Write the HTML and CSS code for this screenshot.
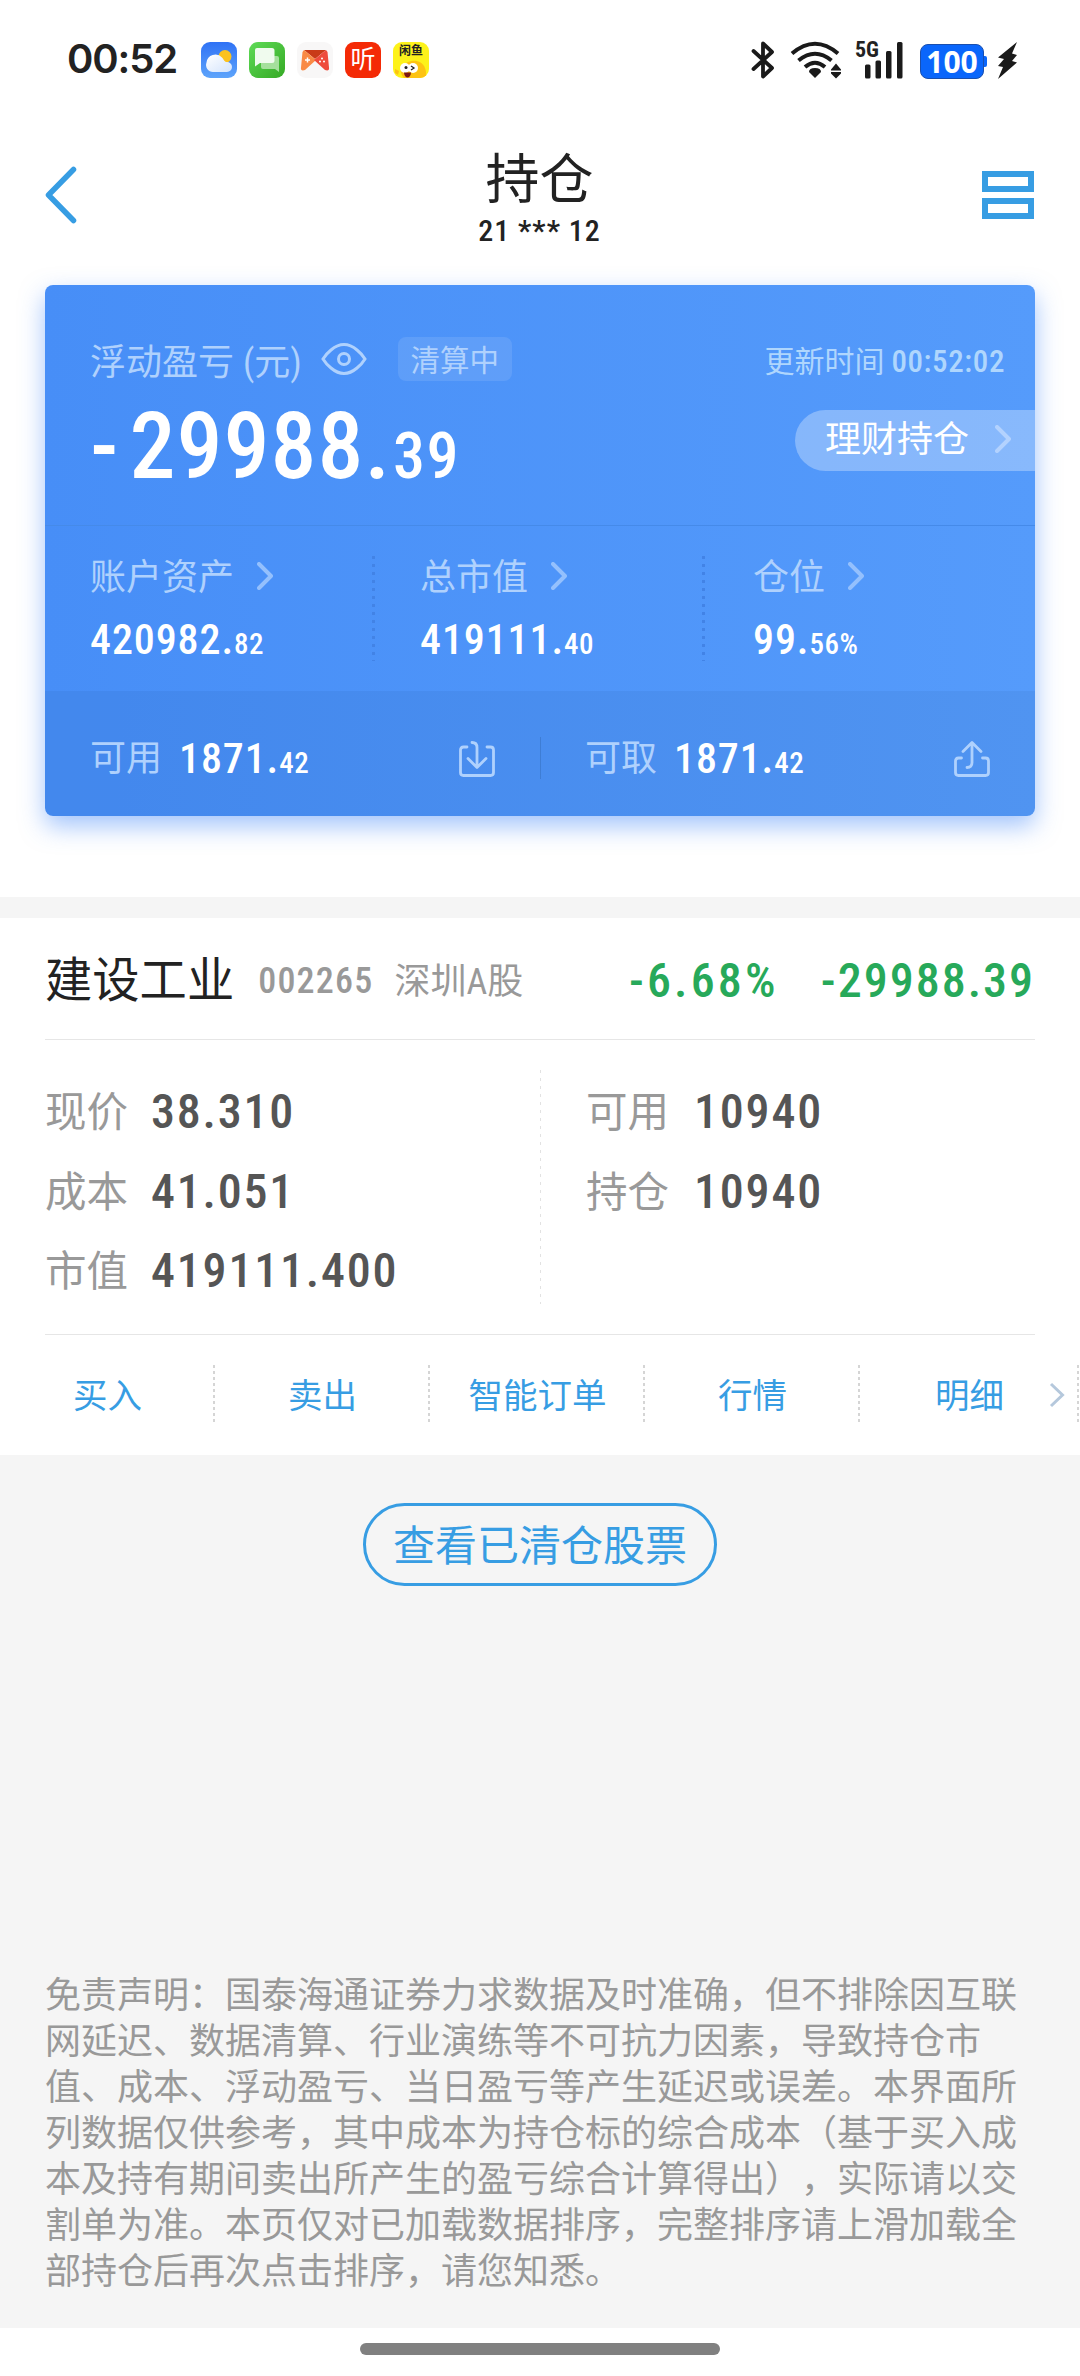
FILE: index.html
```html
<!DOCTYPE html>
<html lang="zh-CN">
<head>
  <meta charset="UTF-8" />
  <title>持仓</title>
  <link rel="stylesheet" href="styles.css">
</head>
<body>

<div class="status-bar">
  <span class="clock">00:52</span>
  <div class="app-icons">
    <svg width="36" height="36" viewBox="0 0 36 36">
      <defs>
        <linearGradient id="sky" x1="0" y1="0" x2="0" y2="1"><stop offset="0" stop-color="#2f72f5"/><stop offset="1" stop-color="#5ea4fb"/></linearGradient>
        <linearGradient id="cloud" x1="0" y1="0" x2="1" y2="1"><stop offset="0" stop-color="#fff"/><stop offset="1" stop-color="#d3e3fc"/></linearGradient>
      </defs>
      <rect width="36" height="36" rx="9" fill="url(#sky)"/>
      <circle cx="24" cy="14.500" r="6.500" fill="#fcc21f"/>
      <path d="M12 30a7 7 0 0 1-6.500-9.500A9 9 0 0 1 21 15.500c2 2 2 4.500 5 4.500a5 5 0 0 1 0 10z" fill="url(#cloud)"/>
    </svg>
    <svg width="36" height="36" viewBox="0 0 36 36">
      <defs><linearGradient id="msg" x1="0" y1="0" x2="1" y2="1"><stop offset="0" stop-color="#5fdb57"/><stop offset="1" stop-color="#35a924"/></linearGradient></defs>
      <rect width="36" height="36" rx="9" fill="url(#msg)"/>
      <path d="M13 14h15a2 2 0 0 1 2 2v14l-4-3H14a2 2 0 0 1-2-2v-9z" fill="#a5e09c"/>
      <path d="M8 6h15a2.500 2.500 0 0 1 2.500 2.500v10A2.500 2.500 0 0 1 23 21H11l-5 3.500V8a2 2 0 0 1 2-2z" fill="#f0fbee"/>
    </svg>
    <svg width="36" height="36" viewBox="0 0 36 36">
      <rect width="36" height="36" rx="9" fill="#f8f7f7"/>
      <path d="M7 8h22L18 17z" fill="#c93a18"/>
      <path d="M7 8l12 10-11 10c-3 1-4.500 0-4-2.500L5.500 10z" fill="#f98a45"/>
      <path d="M29 8L17 18l11 10c3 1 4.500 0 4-2.500L30.500 10z" fill="#ee4b3c"/>
      <path d="M10.500 15.500v5M8 18h5" stroke="#fff" stroke-width="1.500"/>
      <g fill="#fff"><circle cx="25" cy="16.500" r="1"/><circle cx="23" cy="19.500" r="1"/><circle cx="27" cy="19.500" r="1"/></g>
    </svg>
    <span class="app app-red">听</span>
    <span class="app app-yellow">闲鱼
      <svg width="36" height="20" viewBox="0 0 36 20">
        <path d="M8 8c6-9 20-10 24 0 2 5 1 9-1 12H13C9 17 7 12 8 8z" fill="#fdc313"/>
        <circle cx="12" cy="8" r="5" fill="#fff"/><circle cx="20" cy="8" r="5" fill="#fff"/>
        <circle cx="13" cy="7.500" r="1.500" fill="#222"/>
        <path d="M18 6l3 2-3 2" fill="none" stroke="#222" stroke-width="1.300"/>
        <path d="M11 12.500h7c0 3-2 5-3.500 5s-3.500-2-3.500-5z" fill="#7c1613"/>
        <path d="M2 9l4 2-1 4-3-2z" fill="#fdc313"/>
      </svg>
    </span>
  </div>
  <div class="sys-icons">
    <svg width="24" height="40" viewBox="0 0 24 40">
      <path d="M2.500 11L21 28l-9 8.500V3.500L21 12 2.500 29" fill="none" stroke="#1a1a1a" stroke-width="3.800" stroke-linejoin="round" stroke-linecap="round"/>
    </svg>
    <svg class="wifi" width="52" height="40" viewBox="0 0 52 40">
      <g fill="none" stroke="#1a1a1a" stroke-width="4">
        <path d="M2 13.500Q25 -6 48 13.500"/>
        <path d="M8.500 20.500Q25 7 41.500 20.500"/>
        <path d="M15 27Q25 18.500 35 27"/>
      </g>
      <path d="M25 38l-6-6q0-4 6-4t6 4z" fill="#1a1a1a"/>
      <path d="M46 23.500l5 6v1H41v-1zM46 38.500l-5-5v-1.500h10v1.500z" fill="#1a1a1a"/>
    </svg>
    <div class="signal">
      <span>5G</span>
      <svg width="48" height="40" viewBox="0 0 48 40" fill="#1a1a1a">
        <rect x="10" y="24.500" width="5.500" height="14" rx="1.500"/>
        <rect x="20.500" y="20.500" width="5.500" height="18" rx="1.500"/>
        <rect x="31" y="11" width="5.500" height="27.500" rx="1.500"/>
        <rect x="42" y="2" width="5.500" height="36.500" rx="1.500"/>
      </svg>
    </div>
    <div class="battery">100</div>
    <svg class="bolt" width="21" height="37" viewBox="0 0 21 37">
      <path d="M20 0L1 15.500l6 1.500-6 7 5 1L1 37 20 20.500l-5-1.500 5-6-5-1.500z" fill="#1a1a1a"/>
    </svg>
  </div>
</div>

<header class="nav">
  <svg class="back" width="32" height="58" viewBox="0 0 32 58">
    <path d="M28.500 3.500L3.500 29l25 25.500" fill="none" stroke="#379de3" stroke-width="5.500" stroke-linecap="round" stroke-linejoin="round"/>
  </svg>
  <div class="title">
    <h1>持仓</h1>
    <p>21 *** 12</p>
  </div>
  <svg class="menu" width="52" height="48" viewBox="0 0 52 48" fill="none" stroke="#379de3" stroke-width="6">
    <rect x="3" y="3" width="46" height="15"/>
    <rect x="3" y="30" width="46" height="15"/>
  </svg>
</header>

<section class="overview">
  <div class="card">
    <div class="summary">
      <div class="summary-head">
        <span class="label">浮动盈亏<span class="unit">(元)</span></span>
        <svg class="eye" width="46" height="34" viewBox="0 0 46 34" fill="none" stroke="#afd1fd" stroke-width="3">
          <path d="M2 17Q5 12 10 8q13-11 26 0 5 4 8 9-3 5-8 9-13 11-26 0-5-4-8-9z"/>
          <circle cx="23" cy="17" r="5.500"/>
        </svg>
        <span class="tag">清算中</span>
        <span class="updated">更新时间 <b>00:52:02</b></span>
      </div>
      <div class="summary-main">
        <div class="profit"><span class="minus">-</span>29988.<small>39</small></div>
        <a class="pill">理财持仓
          <svg class="arrow" width="16" height="28" viewBox="0 0 16 28"><path d="M2 2l12 12L2 26"/></svg>
        </a>
      </div>
    </div>

    <div class="stats">
      <div class="stat">
        <div class="label">账户资产<svg class="arrow" width="16" height="28" viewBox="0 0 16 28"><path d="M2 2l12 12L2 26"/></svg></div>
        <div class="num">420982.<small>82</small></div>
      </div>
      <div class="stat">
        <div class="label">总市值<svg class="arrow" width="16" height="28" viewBox="0 0 16 28"><path d="M2 2l12 12L2 26"/></svg></div>
        <div class="num">419111.<small>40</small></div>
      </div>
      <div class="stat">
        <div class="label">仓位<svg class="arrow" width="16" height="28" viewBox="0 0 16 28"><path d="M2 2l12 12L2 26"/></svg></div>
        <div class="num">99.<small>56%</small></div>
      </div>
    </div>

    <div class="cash">
      <div class="cash-item">
        <span class="label">可用</span>
        <span class="num">1871.<small>42</small></span>
        <svg width="36" height="36" viewBox="0 0 36 36">
          <path d="M8 6H4.500Q1.500 6 1.500 9v22.500q0 3 3 3h27q3 0 3-3V9q0-3-3-3H28M13 1.500q5 0 5 5V26M9 17.500l9 9 9-9"/>
        </svg>
      </div>
      <div class="cash-item">
        <span class="label">可取</span>
        <span class="num">1871.<small>42</small></span>
        <svg width="36" height="36" viewBox="0 0 36 36">
          <path d="M7.500 17H4.500q-3 0-3 3v11.500q0 3 3 3h27q3 0 3-3V20q0-3-3-3H28.500M13 26.500q5 0 5-5V2M9 10.500l9-9 9 9"/>
        </svg>
      </div>
    </div>
  </div>
</section>

<section class="stock">
  <div class="stock-head">
    <span class="name">建设工业</span>
    <span class="code">002265</span>
    <span class="market">深圳A股</span>
    <span class="rate">-6.68%</span>
    <span class="amount">-29988.39</span>
  </div>
  <div class="detail">
    <dl>
      <div><dt>现价</dt><dd>38.310</dd></div>
      <div><dt>成本</dt><dd>41.051</dd></div>
      <div><dt>市值</dt><dd>419111.400</dd></div>
    </dl>
    <dl class="right">
      <div><dt>可用</dt><dd>10940</dd></div>
      <div><dt>持仓</dt><dd>10940</dd></div>
    </dl>
  </div>
  <nav class="actions">
    <a>买入</a>
    <a>卖出</a>
    <a>智能订单</a>
    <a>行情</a>
    <a>明细<svg class="more" width="16" height="26" viewBox="0 0 16 26"><path d="M2 2l11.500 11L2 24" fill="none" stroke="#b5c8dc" stroke-width="3"/></svg></a>
  </nav>
</section>

<main class="rest">
  <button class="cleared">查看已清仓股票</button>
  <p class="disclaimer">免责声明：国泰海通证券力求数据及时准确，但不排除因互联网延迟、数据清算、行业演练等不可抗力因素，导致持仓市值、成本、浮动盈亏、当日盈亏等产生延迟或误差。本界面所列数据仅供参考，其中成本为持仓标的综合成本（基于买入成本及持有期间卖出所产生的盈亏综合计算得出），实际请以交割单为准。本页仅对已加载数据排序，完整排序请上滑加载全部持仓后再次点击排序，请您知悉。</p>
</main>

<footer class="home"><div class="home-bar"></div></footer>

</body>
</html>
```
FILE: styles.css
```css
* { box-sizing: border-box; }
html, body {
  margin: 0; padding: 0;
}
body {
  width: 1080px;
  height: 2376px;
  display: flex;
  flex-direction: column;
  font-family: 'Roboto Condensed', 'Noto Sans CJK SC', sans-serif;
  font-size: 36px;
  color: #222;
  background: #fff;
  overflow: hidden;
}
h1, p, dl, dd { margin: 0; }
svg { display: block; flex: none; }

/* status bar */
.status-bar {
  height: 120px;
  flex: none;
  display: flex;
  align-items: center;
  padding: 0 62px 0 67px;
}
.clock {
  font-family: Inter, sans-serif;
  font-weight: 600;
  font-size: 40px;
  line-height: 40px;
  width: 134px;
  margin-top: -2px;
  letter-spacing: -1.100px;
}
.app-icons { display: flex; gap: 12px; }
.app {
  width: 36px; height: 36px;
  border-radius: 9px;
  overflow: hidden;
  text-align: center;
}
.app-red {
  background: #f42a06;
  color: #fff;
  font-size: 25px;
  line-height: 36px;
}
.app-yellow {
  background: #fdf21a;
  font-size: 12px;
  font-weight: 700;
  line-height: 18px;
}
.sys-icons {
  display: flex;
  align-items: center;
  margin-left: auto;
}
.wifi { margin-left: 15px; }
.signal {
  position: relative;
  margin-left: 13px;
}
.signal span {
  position: absolute;
  left: 0; top: 0;
  font-size: 22px;
  line-height: 20px;
  font-weight: 700;
}
.battery {
  position: relative;
  width: 64px; height: 35px;
  margin-left: 17px;
  margin-top: 3px;
  border-radius: 8px;
  background: #0a66fb;
  border: 1px solid #1a4fae;
  color: #fff;
  font: 700 30px/34px 'Open Sans', sans-serif;
  text-align: center;
}
.battery::after {
  content: "";
  position: absolute;
  right: -4px; top: 11px;
  width: 3px; height: 11px;
  border-radius: 0 2px 2px 0;
  background: #0a66fb;
}
.bolt { margin-left: 13px; }

/* nav */
.nav {
  height: 150px;
  flex: none;
  display: flex;
  justify-content: space-between;
  align-items: center;
  padding: 0 46px 0 45px;
}
.back { margin-right: 20px; }
.title {
  text-align: center;
  padding-top: 11px;
}
.title h1 {
  font-size: 54px;
  font-weight: 400;
  line-height: 60px;
}
.title p {
  font-size: 30px;
  line-height: 40px;
  font-weight: 500;
  letter-spacing: 1px;
}

/* blue card */
.overview {
  flex: none;
  padding: 15px 45px 81px;
  border-bottom: 21px solid #f5f5f5;
}
.card {
  height: 531px;
  border-radius: 8px;
  background: linear-gradient(90deg, #478ef7, #559bfb);
  box-shadow: 0 10px 24px rgba(70, 138, 250, 0.5);
  color: #fff;
}
.label { color: #afd1fd; }
.num, .profit { font-weight: 500; }
.arrow path {
  fill: none;
  stroke: #94c0fd;
  stroke-width: 4;
  stroke-linecap: round;
  stroke-linejoin: round;
}
.summary {
  height: 241px;
  padding: 52px 0 0 45px;
  border-bottom: 1px solid #458ae9;
}
.summary-head {
  height: 44px;
  display: flex;
  align-items: center;
  padding-right: 30px;
}
.unit { margin-left: 9px; }
.eye { margin-left: 19px; }
.tag {
  margin-left: 31px;
  width: 114px;
  border-radius: 8px;
  background: rgba(255, 255, 255, 0.1);
  color: #afd1fd;
  font-size: 29.500px;
  line-height: 48px;
  height: 44px;
  text-align: center;
}
.updated {
  margin-left: auto;
  font-size: 30px;
  color: #afd6fd;
}
.updated b {
  font-size: 31px;
  font-weight: 500;
  letter-spacing: 0.6px;
}
.summary-main {
  display: flex;
  justify-content: space-between;
}
.profit {
  padding-top: 3px;
  line-height: 126px;
  font-size: 92px;
  letter-spacing: 1px;
}
.profit .minus { letter-spacing: 11px; }
.profit small {
  margin-left: 2px;
  font-size: 64px;
  letter-spacing: 1.500px;
}
.pill {
  margin-top: 29px;
  width: 240px; height: 61px;
  padding: 0 24px 0 30px;
  display: flex;
  align-items: center;
  justify-content: space-between;
  line-height: 65px;
  border-radius: 31px 0 0 31px;
  background: rgba(255, 255, 255, 0.3);
}
.pill .arrow { margin-bottom: 3px; }
.pill .arrow path { stroke: #b3d2fe; }

.stats {
  height: 165px;
  display: flex;
}
.stat {
  width: 330px;
  padding: 32px 0 0 45px;
}
.stat:last-child { padding-left: 48px; }
.stat:not(:last-child) {
  background: repeating-linear-gradient(#4283e6 0 3px, transparent 3px 8px) 100% 30px / 3px 105px no-repeat;
}
.stat .label {
  display: flex;
  align-items: center;
  gap: 23px;
  line-height: 40px;
}
.stat .arrow { margin-bottom: 4px; }
.stat .num { margin-top: 17px; }
.num {
  font-size: 42px;
  line-height: 50px;
  letter-spacing: 0.900px;
}
.num small {
  font-size: 29px;
  letter-spacing: 0.500px;
}

.cash {
  height: 125px;
  display: flex;
  border-radius: 0 0 8px 8px;
  background: linear-gradient(rgba(0, 30, 60, 0.15), rgba(0, 30, 60, 0.15)) 50% 46px / 1px 42px no-repeat, rgba(20, 60, 120, 0.07);
}
.cash-item {
  width: 50%;
  padding: 11px 45px 0;
  display: flex;
  align-items: center;
}
.cash-item .label { line-height: 46px; }
.cash-item .num {
  margin-left: 17px;
  padding-top: 4px;
}
.cash-item svg {
  margin-left: auto;
  fill: none;
  stroke: #afd1fd;
  stroke-width: 2.800;
  stroke-linecap: round;
  stroke-linejoin: round;
}

/* stock */
.stock { flex: none; }
.stock-head {
  height: 122px;
  margin: 0 45px;
  padding-top: 4px;
  display: flex;
  align-items: center;
  border-bottom: 1px solid #e6e6e6;
  line-height: 60px;
}
.name { font-size: 47.300px; }
.code {
  margin-left: 24px;
  font-weight: 500;
  letter-spacing: 1.200px;
}
.market {
  margin-left: 21px;
  padding-top: 2px;
}
.code, .market { color: #999; }
.rate, .amount {
  font-size: 48px;
  font-weight: 500;
  letter-spacing: 2px;
  color: #27a95a;
}
.rate {
  margin-left: auto;
  letter-spacing: 3.200px;
}
.amount { margin-left: 42px; }

.detail {
  height: 295px;
  margin: 0 45px;
  padding-top: 33px;
  display: flex;
  border-bottom: 1px solid #e6e6e6;
  background: repeating-linear-gradient(#e2e2e2 0 3px, transparent 3px 8px) 50% 30px / 1px 234px no-repeat;
}
.detail dl { width: 495px; }
.detail dl div {
  display: flex;
  line-height: 78.500px;
}
.detail dt {
  font-size: 41.500px;
  color: #999;
  width: 106px;
  padding-top: 1px;
}
.detail dd {
  font-size: 48px;
  font-weight: 500;
  letter-spacing: 1.800px;
  color: #555;
}
.detail .right { padding-left: 46px; }
.detail .right dt { width: 108px; }

.actions {
  height: 120px;
  display: flex;
}
.actions a {
  position: relative;
  width: 215px;
  line-height: 123px;
  text-align: center;
  font-size: 34.500px;
  color: #379de3;
  background: repeating-linear-gradient(#d5d5d5 0 3px, transparent 3px 6px) 100% 30px / 2px 57px no-repeat;
}
.actions a:last-child { width: 219px; }
.more {
  position: absolute;
  right: 14px; top: 47px;
}

/* rest */
.rest {
  flex: 1;
  display: flex;
  flex-direction: column;
  align-items: center;
  justify-content: space-between;
  padding: 48px 45px 33px;
  background: #f5f5f5;
}
.cleared {
  width: 354px; height: 83px;
  padding: 2px 0 0;
  border: 3px solid #379de3;
  border-radius: 42px;
  background: none;
  color: #379de3;
  font: inherit;
  font-size: 42px;
  line-height: 77px;
  white-space: nowrap;
}
.disclaimer {
  width: 100%;
  line-height: 46px;
  color: #999;
  text-spacing-trim: space-all;
}
.home {
  flex: none;
  height: 48px;
  padding-top: 15px;
}
.home-bar {
  width: 360px; height: 12px;
  margin: 0 auto;
  border-radius: 6px;
  background: #808080;
}
```
